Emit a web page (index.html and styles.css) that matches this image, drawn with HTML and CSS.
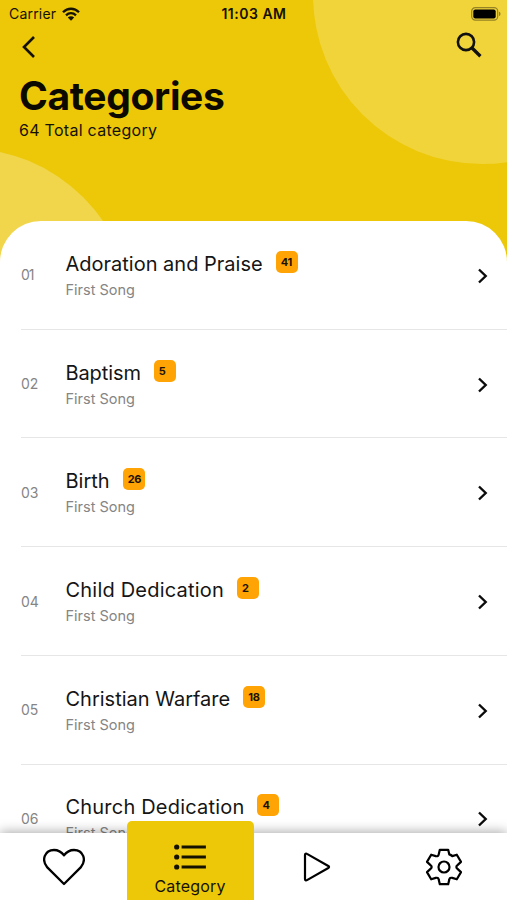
FILE: index.html
```html
<!DOCTYPE html>
<html lang="en">
<head>
<meta charset="utf-8">
<title>Categories</title>
<link rel="stylesheet" href="styles.css">
</head>
<body>
<svg class="defs" width="0" height="0" aria-hidden="true"><symbol id="chevron" viewBox="0 0 12 18"><path d="M2 2.500 8.700 9 2 15.500" fill="none" stroke="#0b0b0b" stroke-width="2.400"/></symbol></svg>
<div class="screen">
  <header class="header">
    <div class="orb orb-right"></div>
    <div class="orb orb-left"></div>
    <div class="status">
      <div class="carrier"><span>Carrier</span>
        <svg width="18" height="14" viewBox="0 0 18 14"><g fill="none" stroke="#171300" stroke-width="2.300"><path d="M1 5.200C5.600.6 12.400.6 17 5.200"/><path d="M4 8.300c2.900-2.800 7.100-2.800 10 0"/></g><path d="M5.800 10.500c1.900-1.600 4.500-1.600 6.400 0L9 13.700z" fill="#171300"/></svg>
      </div>
      <div class="time">11:03 AM</div>
      <svg class="battery" width="30" height="14" viewBox="0 0 30 14"><rect x=".7" y=".7" width="26" height="12.400" rx="3.600" fill="none" stroke="#958326" stroke-width="1.200"/><rect x="2.300" y="2.400" width="22.400" height="9" rx="2" fill="#000"/><path d="M28 4.800c2 .7 2 3.600 0 4.300z" fill="#958326"/></svg>
    </div>
    <div class="tools">
      <svg width="16" height="24" viewBox="0 0 16 24"><path d="M14 2 4 12 14 22" fill="none" stroke="#151100" stroke-width="2.600"/></svg>
      <svg width="26" height="26" viewBox="0 0 26 26"><circle cx="10" cy="10" r="8.100" fill="none" stroke="#111" stroke-width="2.600"/><path d="m15.800 15.800 8.600 8.400" stroke="#111" stroke-width="3.300"/></svg>
    </div>
    <h1>Categories</h1>
    <p class="total">64 Total category</p>
  </header>
  <main class="sheet">
    <div class="row"><span class="num n1">01</span><div class="info"><div class="title"><span class="name">Adoration and Praise</span><span class="badge">41</span></div><div class="sub">First Song</div></div><svg class="chev"><use href="#chevron"/></svg></div>
    <div class="row"><span class="num">02</span><div class="info"><div class="title"><span class="name snug">Baptism</span><span class="badge">5</span></div><div class="sub">First Song</div></div><svg class="chev"><use href="#chevron"/></svg></div>
    <div class="row"><span class="num">03</span><div class="info"><div class="title"><span class="name">Birth</span><span class="badge">26</span></div><div class="sub">First Song</div></div><svg class="chev"><use href="#chevron"/></svg></div>
    <div class="row"><span class="num">04</span><div class="info"><div class="title"><span class="name loose">Child Dedication</span><span class="badge">2</span></div><div class="sub">First Song</div></div><svg class="chev"><use href="#chevron"/></svg></div>
    <div class="row"><span class="num">05</span><div class="info"><div class="title"><span class="name">Christian Warfare</span><span class="badge">18</span></div><div class="sub">First Song</div></div><svg class="chev"><use href="#chevron"/></svg></div>
    <div class="row"><span class="num">06</span><div class="info"><div class="title"><span class="name loose">Church Dedication</span><span class="badge">4</span></div><div class="sub">First Song</div></div><svg class="chev"><use href="#chevron"/></svg></div>
  </main>
  <nav class="tabs">
    <div class="tab"><svg width="42" height="38" viewBox="0 0 42 38"><path d="M21 36 4.300 19.400C-2 12 1.800 2 11 2c4.200 0 7.300 1.800 10 5.300C23.700 3.800 26.800 2 31 2c9.200 0 13 10 6.700 17.400z" fill="none" stroke="#000" stroke-width="2.300" stroke-linejoin="round"/></svg></div>
    <div class="tab active"><svg width="32" height="26" viewBox="0 0 32 26"><g fill="#141100"><circle cx="2.700" cy="3" r="2.600"/><circle cx="2.700" cy="13" r="2.600"/><circle cx="2.700" cy="23" r="2.600"/></g><path d="M9.200 3H30.300M9.200 13H30.300M9.200 23H30.300" stroke="#141100" stroke-width="3.200" stroke-linecap="square"/></svg><span>Category</span></div>
    <div class="tab"><svg width="28" height="30" viewBox="0 0 28 30"><path d="M2 3v24c0 1.300 1 1.700 2 1.100L25.300 16c1-.6 1-1.400 0-2L4 1.900C3 1.300 2 1.700 2 3z" fill="none" stroke="#000" stroke-width="2.200" stroke-linejoin="round"/></svg></div>
    <div class="tab"><svg width="38" height="38" viewBox="-19 -19 38 38"><g fill="none" stroke="#000" stroke-width="2.200" stroke-linejoin="round"><circle r="5.500"/><path d="M-4.200-17.200H4.200L5.300-12.600Q7.200-11.900 8.300-10.900L12.800-12.300L17-5.100L13.500-1.900Q11.200 0 13.500 1.900L17 5.100L12.800 12.300L8.300 10.900Q5.600 10.300 5.300 12.600L4.200 17.200H-4.200L-5.300 12.600Q-5.600 10.300-8.300 10.900L-12.800 12.300L-17 5.100L-13.500 1.900Q-11.200 0-13.500-1.900L-17-5.100L-12.800-12.300L-8.300-10.900Q-5.600-10.300-5.300-12.600Z"/></g></svg></div>
  </nav>
</div>
</body>
</html>
```
FILE: styles.css
```css
* { box-sizing: border-box; }
body { margin: 0; font-family: Inter, "Liberation Sans", sans-serif; }
svg { display: block; flex: none; }
.defs { position: absolute; }
.screen { height: 900px; overflow: hidden; display: flex; flex-direction: column; background: #ecc808; position: relative; }
.header { height: 220.5px; flex: none; position: relative; color: #151100; }
.orb { position: absolute; width: 338px; height: 338px; border-radius: 50%; background: #f1d33a; }
.orb-right { left: 313px; top: -174.5px; }
.orb-left { left: -205px; top: 147.5px; background: #f1d54a; }
.status, .tools, h1, .total { position: relative; }
.status { display: grid; grid-template-columns: 1fr auto 1fr; align-items: center; height: 27px; padding: 0 6px 0 7px; font-size: 14px; }
.carrier { display: flex; align-items: center; gap: 6px; letter-spacing: .2px; padding-left: 2px; }
.time { font-weight: 600; letter-spacing: .5px; }
.battery { justify-self: end; }
.tools { display: flex; justify-content: space-between; align-items: center; padding: 0 25px 0 20px; height: 38px; }
.tools svg:first-child { margin-top: 1px; }
.tools svg:last-child { margin-top: -3px; }
h1 { margin: 8px 0 0 19px; font-size: 39px; line-height: 46px; font-weight: 700; letter-spacing: -.35px; color: #0c0a00; white-space: nowrap; }
.total { margin: 1px 0 0 19px; font-size: 16px; line-height: 20px; letter-spacing: .28px; }
.sheet { flex: none; background: #fff; border-radius: 41px 41px 0 0; height: 700px; position: relative; padding-top: .6px; }
.row { height: 108.7px; margin-left: 21px; padding: 0 18px 0 0; border-bottom: 1px solid #e6e6e6; display: flex; align-items: center; }
.num { width: 44.5px; font-size: 14px; color: #858585; }
.n1 { letter-spacing: -1px; }
.info { flex: 1; }
.title { display: flex; align-items: center; height: 30px; }
.name { font-size: 20px; line-height: 30px; font-weight: 400; color: #151515; white-space: nowrap; }
.snug { letter-spacing: -.1px; }
.loose { letter-spacing: .2px; }
.badge { width: 22px; height: 22px; margin: -4px 0 0 13px; padding-left: 5px; border-radius: 5px; background: #ffa404; font-size: 11px; font-weight: 700; line-height: 23px; color: #1b1200; letter-spacing: -.2px; }
.sub { font-size: 14.5px; line-height: 22px; color: #858585; }
.chev { width: 12px; height: 18px; margin-top: 2px; }
.tabs { position: absolute; left: 0; right: 0; bottom: 0; height: 67px; background: #fff; display: grid; grid-template-columns: repeat(4, 1fr); box-shadow: 0 -1px 11px rgba(0,0,0,.35); }
.tab { display: flex; align-items: center; justify-content: center; }
.tab:first-child svg { margin-left: 2px; }
.active { flex-direction: column; justify-content: flex-start; height: 79.5px; margin-top: -12.5px; padding-top: 23.5px; background: #ecc808; border-radius: 5px 5px 0 0; font-size: 16px; letter-spacing: .2px; color: #141100; }
.active span { line-height: 22px; margin-top: 5px; }
```
